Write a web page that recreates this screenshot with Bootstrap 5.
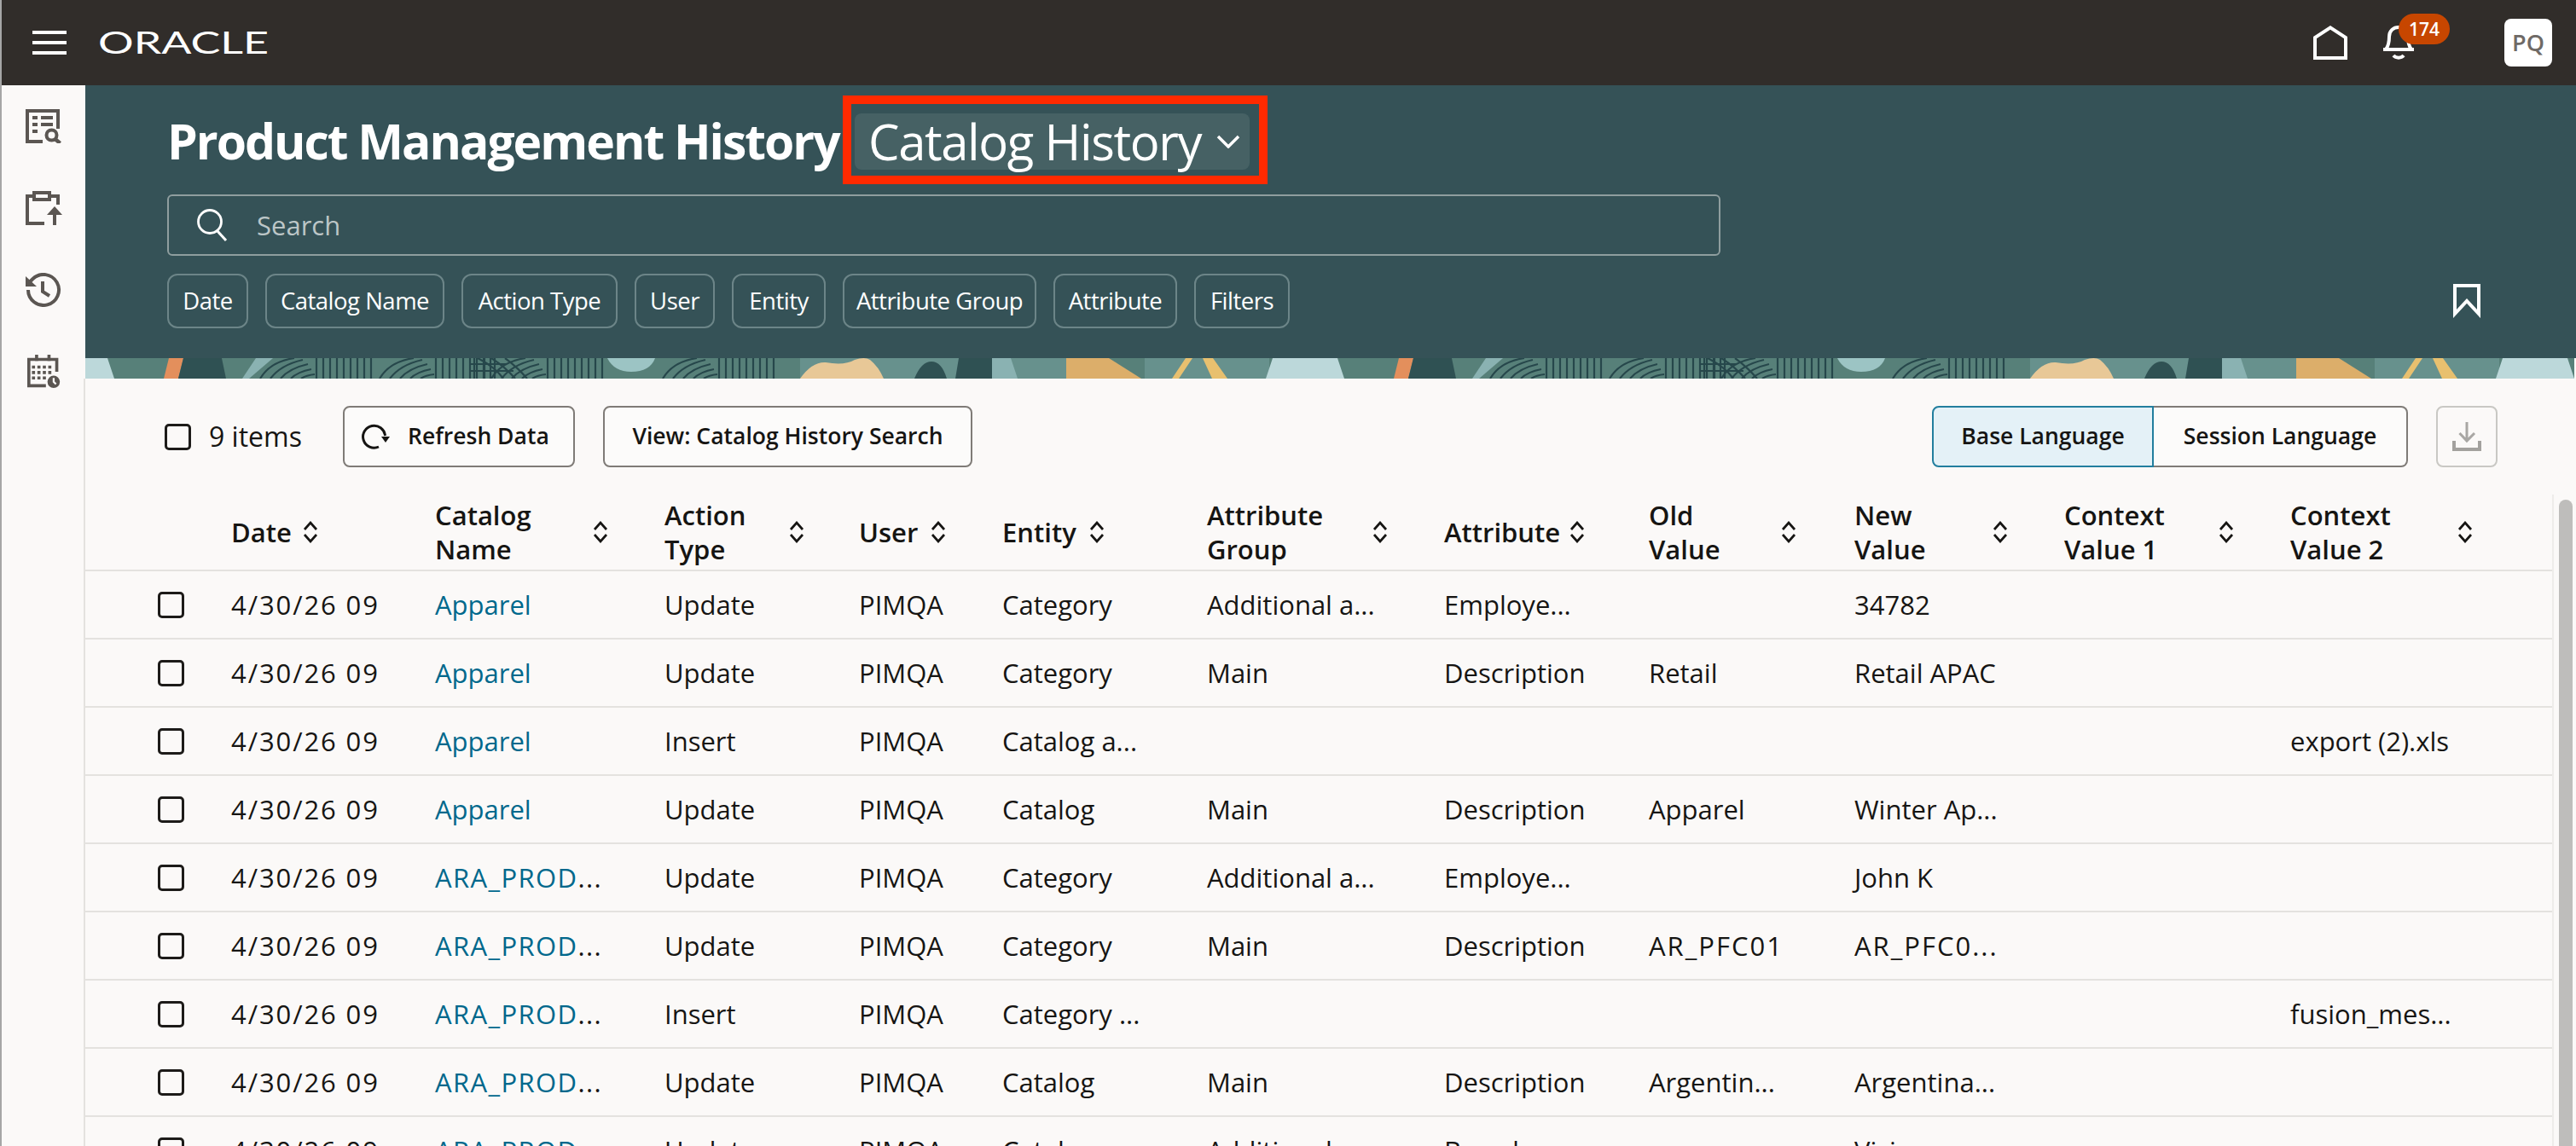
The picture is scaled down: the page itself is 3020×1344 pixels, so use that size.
<!DOCTYPE html>
<html lang="en">
<head>
<meta charset="utf-8">
<title>Product Management History</title>
<link href="https://cdn.jsdelivr.net/npm/bootstrap@5.3.0/dist/css/bootstrap.min.css" rel="stylesheet">
<style>
html,body{height:1344px;overflow:hidden}
body{background:#fbf9f8;color:#161513;font-family:"Open Sans","Liberation Sans",sans-serif;font-size:31px;border-left:2px solid #a6a6a6}
.topbar{height:100px;background:#312d2a;padding:0 28px 0 36px}
.burger{width:40px;height:28px;margin-right:37px}
.brand-word{width:200px;height:28px;overflow:visible}
.top-home{width:40px;height:40px;margin-right:42px}
.bell-wrap{width:36px;height:40px;margin-right:106px}
.bell-count{position:absolute;left:18px;top:-14px;width:60px;height:36px;border-radius:18px;background:#c74600;color:#fff;font-size:21px;font-weight:600;line-height:36px;text-align:center}
.avatar-box{width:56px;height:56px;background:#fff;border-radius:8px;color:#6f6a66;font-size:27px;font-weight:600}
.side-rail{width:96px;height:1244px;padding:28px 0 0 28px;gap:56px}
.rail-ico{width:44px;height:40px;display:block}
.main-pane{min-width:0}
.hero{height:320px;margin-left:2px;background:#355257;padding:12px 112px 0 96px;color:#fff}
.title-row{height:104px}
.page-title{font-size:57px;letter-spacing:-2px;font-weight:700;margin:2px 0 0;line-height:1;white-space:nowrap;width:792px;flex:none}
.red-box{width:498px;height:104px;border:10px solid #ff2a00;padding:11px 11px 11px 4px}
.switcher{height:66px;width:100%;background:#466164;border-radius:8px;padding-left:16px;font-size:58px;letter-spacing:-1.4px;line-height:1;gap:18px;white-space:nowrap}
.search-box{margin-top:12px;height:72px;width:1821px;border:2px solid #8f9e9f;border-radius:6px;padding-left:33px;gap:34px;font-size:31px;color:#bcc6c7}
.chip-row{margin-top:21px;gap:20px}
.fchip{height:64px;border:2px solid #6c8588;border-radius:12px;font-size:27.5px;letter-spacing:-.5px;color:#fff;display:flex;align-items:center;justify-content:center;white-space:nowrap;flex:none}
.fchip:nth-child(1){width:95px}.fchip:nth-child(2){width:210px}.fchip:nth-child(3){width:183px}.fchip:nth-child(4){width:94px}
.fchip:nth-child(5){width:110px}.fchip:nth-child(6){width:227px}.fchip:nth-child(7){width:145px}.fchip:nth-child(8){width:112px}
.pattern-band{height:24px;margin-left:2px;display:block;width:2918px}
.lower{border-left:2px solid #e4e2df;height:900px}
.tool-row{padding:32px 92px 0 93px;height:103px}
.tick{width:31px;height:31px;border:3px solid #1d1b19;border-radius:5px;flex:none;display:block}
.tool-count{width:209px;height:72px}
.count-label{margin-left:21px;font-weight:500;font-size:32px}
.act-btn{height:72px;border:2px solid #7f7b77;border-radius:8px;background:#fcfbfa;font-size:26.5px;font-weight:600;color:#161513;white-space:nowrap;padding:0;display:flex;align-items:center;justify-content:center}
.refresh-btn{width:272px;gap:20px;justify-content:flex-start;padding-left:20px}
.view-btn{width:433px;margin-left:33px}
.lang-group{width:558px;margin-left:auto}
.lang-a,.lang-b{height:72px;font-size:26.5px;font-weight:600;display:flex;align-items:center;justify-content:center}
.lang-a{width:260px;background:#e4f1f7;border:2px solid #227e9e;border-radius:8px 0 0 8px}
.lang-b{width:298px;background:#fcfbfa;border:2px solid #7f7b77;border-left:0;border-radius:0 8px 8px 0}
.export-btn{width:72px;height:72px;margin-left:33px;border:2px solid #c9c8c4;border-radius:8px}
.grid-wrap{height:797px;margin-top:33px;overflow:hidden}
.hist-grid{width:2892px;table-layout:fixed;margin:0;--bs-table-bg:transparent;--bs-table-color:#161513;--bs-table-border-color:#e4e2df;flex:none}
.hist-grid th,.hist-grid td{padding:0 0 0 16px;vertical-align:middle;border-bottom-width:2px;white-space:nowrap}
.hist-grid th{height:89px;font-weight:600;line-height:40px;font-size:31px}
.hist-grid td{height:80px;font-weight:400;font-size:31px}
.hist-grid .pick{padding-left:85px}
.datecell{letter-spacing:1.9px}
.caps-run{letter-spacing:1.4px}
.code-run{letter-spacing:2px}
.hist-grid a{color:#00688c;text-decoration:none}
.head-in{display:flex;align-items:center}
.head-in span{display:block;flex:none;white-space:normal}
th:nth-child(2) span{width:84px}th:nth-child(3) span{width:185px}th:nth-child(4) span{width:146px}
th:nth-child(5) span{width:84px}th:nth-child(6) span{width:102px}th:nth-child(7) span{width:194px}
th:nth-child(8) span{width:147px}th:nth-child(9) span{width:155px}th:nth-child(10) span{width:162px}
th:nth-child(11) span{width:181px}th:nth-child(12) span{width:196px}
.sorter{width:18px;height:26px;flex:none}
.scroll-side{width:26px;flex:none;border-left:2px solid #eeecea;padding:6px 2px 0 6px}
.scroll-thumb{width:16px;height:800px;background:#bebdbb;border-radius:8px}
</style>
</head>
<body>
<header class="topbar d-flex align-items-center">
  <svg class="burger" viewBox="0 0 40 28" aria-hidden="true"><path fill="#fff" d="M0 0h40v4H0zM0 12h40v4H0zM0 24h40v4H0z"/></svg>
  <svg class="brand-word" viewBox="0 0 200 28" aria-label="Oracle"><text x="0" y="27" font-family="Lato, sans-serif" font-size="37" fill="#fff" textLength="200" lengthAdjust="spacingAndGlyphs">ORACLE</text></svg>
  <div class="ms-auto d-flex align-items-center">
    <svg class="top-home" viewBox="0 0 40 40" aria-label="Home"><path fill="none" stroke="#fff" stroke-width="4" d="M2 38V14.2L20 2.4l18 11.8V38z"/></svg>
    <div class="bell-wrap position-relative">
      <svg width="36" height="40" viewBox="0 0 36 40" class="d-block" aria-label="Notifications"><path fill="none" stroke="#fff" stroke-width="4" d="M3 28C7 23 7 18 7 13 7 6 12 2 18 2s11 4 11 11c0 5 0 10 4 15"/><path fill="#fff" d="M0 26h36v4H0z"/><path fill="none" stroke="#fff" stroke-width="4" d="M12 35c3 3.500 9 3.500 12 0"/></svg>
      <span class="bell-count">174</span>
    </div>
    <div class="avatar-box d-flex align-items-center justify-content-center">PQ</div>
  </div>
</header>
<div class="d-flex">
  <nav class="side-rail d-flex flex-column flex-shrink-0">
    <svg class="rail-ico" viewBox="0 0 44 40" aria-label="Search history"><g fill="none" stroke="#5b5652" stroke-width="4"><path d="M20 38H2V2h36v21"/><circle cx="30.500" cy="30.500" r="6"/><path d="M34.500 35l6 5" stroke-width="4.500"/></g><path fill="#5b5652" d="M8 8h6v4H8zM18 8h14v4H18zM8 16h6v4H8zM18 16h14v4H18zM8 24h6v4H8z"/></svg>
    <svg class="rail-ico" viewBox="0 0 44 40" aria-label="Upload"><g fill="none" stroke="#5b5652" stroke-width="4"><path d="M22 38H2V6h36v10"/><path fill="#fbf9f8" d="M10 2h18v8H10z"/><path d="M34 40V24"/></g><path fill="#5b5652" d="M34 18l9 10h-18z"/></svg>
    <svg class="rail-ico" viewBox="0 0 44 40" aria-label="History"><g fill="none" stroke="#5b5652" stroke-width="4"><path d="M3 20a18 18 0 1 0 5.500-13L3.500 12"/><path d="M20 10v12l8 5"/></g><path fill="#5b5652" d="M0 4v12h13z"/></svg>
    <svg class="rail-ico" viewBox="0 0 44 44" aria-label="Schedule"><g fill="none" stroke="#5b5652" stroke-width="4"><path d="M24 40H2V6h36v16"/></g><path fill="#5b5652" d="M10 0h4v8h-4zM26 0h4v8h-4zM6 14h4v4H6zM13 14h4v4h-4zM20 14h4v4h-4zM27 14h4v4h-4zM6 21h4v4H6zM13 21h4v4h-4zM20 21h4v4h-4zM27 21h4v4h-4zM6 28h4v4H6zM13 28h4v4h-4zM20 28h4v4h-4z"/><circle cx="34" cy="35" r="8" fill="#5b5652"/><path d="M34 30v5l3 3" fill="none" stroke="#fbf9f8" stroke-width="2.500"/></svg>
  </nav>
  <main class="main-pane flex-grow-1">
    <section class="hero d-flex flex-column">
      <div class="title-row d-flex align-items-center">
        <h1 class="page-title">Product Management History</h1>
        <div class="red-box flex-shrink-0">
          <div class="switcher d-flex align-items-center"><span>Catalog History</span><svg width="28" height="16" viewBox="0 0 28 16" aria-hidden="true"><path fill="none" stroke="#fff" stroke-width="3.500" d="M2 2l12 12L26 2"/></svg></div>
        </div>
      </div>
      <div class="search-box d-flex align-items-center">
        <svg width="36" height="38" viewBox="0 0 36 38" aria-hidden="true"><circle cx="15" cy="15" r="13.500" fill="none" stroke="#fff" stroke-width="2.800"/><path d="M24 26l10 11" stroke="#fff" stroke-width="3"/></svg>
        <span>Search</span>
      </div>
      <div class="chip-row d-flex align-items-center">
        <span class="fchip">Date</span><span class="fchip">Catalog Name</span><span class="fchip">Action Type</span><span class="fchip">User</span><span class="fchip">Entity</span><span class="fchip">Attribute Group</span><span class="fchip">Attribute</span><span class="fchip">Filters</span>
        <svg class="ms-auto" width="32" height="40" viewBox="0 0 32 40" aria-label="Saved searches"><path fill="none" stroke="#fff" stroke-width="4" d="M2 2h28v33L16 20 2 35z"/></svg>
      </div>
    </section>
    <svg class="pattern-band" viewBox="0 0 2918 24" preserveAspectRatio="none" aria-hidden="true">
      <defs>
        <g id="prints" fill="none" stroke="#26474b" stroke-width="2.200">
          <path d="M0 24Q12 4 40 0M12 24Q24 8 50 2M24 24Q34 12 56 7M36 24Q44 16 60 13M48 24Q54 20 64 19"/>
          <path d="M66 0v24M74 0v24M82 0v24M90 0v24M98 0v24M106 0v24M114 0v24M122 0v24M130 0v24"/>
        </g>
        <g id="nets" fill="none" stroke="#26474b" stroke-width="2.200">
          <path d="M0 24Q-10 10-30 0M14 24Q2 10-14 0M28 24Q16 10 2 0"/>
          <path d="M-34 0v24M-22 0v24M-10 0v24M-40 7h44M-40 15h52"/>
        </g>
        <pattern id="tile" width="1442" height="24" patternUnits="userSpaceOnUse">
          <rect width="1442" height="24" fill="#578079"/>
          <path fill="#67918d" d="M838 0h360v24H838zM1242 0h146v24h-146z"/>
          <path fill="#bcd8da" d="M0 0h26l8 24H0zM1392 0h50v24h-58z"/>
          <path fill="#e38f5c" d="M98 0h17l-6 24H92z"/>
          <path fill="#2f5153" d="M115 0h45l5 24h-56z"/>
          <path fill="#8ab2b2" d="M200 0h20l-28 24h-8z"/>
          <use href="#prints" x="205"/>
          <use href="#prints" x="345"/>
          <use href="#nets" x="490"/>
          <use href="#prints" x="476"/>
          <path fill="#9cc4c4" d="M612 0h56q-6 16-28 16-20 0-28-16z"/>
          <use href="#prints" x="677"/>
          <path fill="#e8c897" d="M838 24q14-20 30-19 22 4 34-3 12-4 18 0 10 8 16 22z"/>
          <path fill="#2f5153" d="M972 24q8-20 20-20 12 0 18 20zM1024 0h39l5 24h-48z"/>
          <path fill="#8ab2b2" d="M1063 0h22l8 24h-30z"/>
          <path fill="#dcae6a" d="M1150 0h50l38 24h-88z"/>
          <path fill="#e8c06f" d="M1290 0h8l-16 24h-8zM1310 0h12l17 24h-18z"/>
        </pattern>
      </defs>
      <rect width="2918" height="24" fill="url(#tile)"/>
    </svg>
    <section class="lower">
      <div class="tool-row d-flex align-items-start">
        <div class="d-flex align-items-center tool-count">
          <span class="tick"></span><span class="count-label">9 items</span>
        </div>
        <button type="button" class="act-btn refresh-btn"><svg width="34" height="30" viewBox="0 0 34 30" aria-hidden="true"><path fill="none" stroke="#161513" stroke-width="3" d="M20 27A13 13 0 1 1 27.500 14"/><path fill="#161513" d="M23 15h10l-5 7z"/></svg><span>Refresh Data</span></button>
        <button type="button" class="act-btn view-btn">View: Catalog History Search</button>
        <div class="lang-group d-flex">
          <div class="lang-a">Base Language</div><div class="lang-b">Session Language</div>
        </div>
        <div class="export-btn d-flex align-items-center justify-content-center">
          <svg width="34" height="34" viewBox="0 0 34 34" aria-label="Export"><path fill="none" stroke="#a9a7a4" stroke-width="3" d="M17 0v22M8.500 13l8.500 9 9-9"/><path fill="none" stroke="#a3a19e" stroke-width="4" d="M2 22v10h30V22"/></svg>
        </div>
      </div>
      <div class="grid-wrap d-flex">
        <table class="table hist-grid">
          <colgroup><col width="155"><col width="239"><col width="269"><col width="228"><col width="168"><col width="240"><col width="278"><col width="240"><col width="241"><col width="246"><col width="265"><col width="323"></colgroup>
          <thead>
            <tr>
              <th></th>
              <th><div class="head-in"><span>Date</span><svg class="sorter" viewBox="0 0 18 26"><use href="#srt"/></svg></div></th>
              <th><div class="head-in"><span>Catalog Name</span><svg class="sorter" viewBox="0 0 18 26"><use href="#srt"/></svg></div></th>
              <th><div class="head-in"><span>Action Type</span><svg class="sorter" viewBox="0 0 18 26"><use href="#srt"/></svg></div></th>
              <th><div class="head-in"><span>User</span><svg class="sorter" viewBox="0 0 18 26"><use href="#srt"/></svg></div></th>
              <th><div class="head-in"><span>Entity</span><svg class="sorter" viewBox="0 0 18 26"><use href="#srt"/></svg></div></th>
              <th><div class="head-in"><span>Attribute Group</span><svg class="sorter" viewBox="0 0 18 26"><use href="#srt"/></svg></div></th>
              <th><div class="head-in"><span>Attribute</span><svg class="sorter" viewBox="0 0 18 26"><use href="#srt"/></svg></div></th>
              <th><div class="head-in"><span>Old<br>Value</span><svg class="sorter" viewBox="0 0 18 26"><use href="#srt"/></svg></div></th>
              <th><div class="head-in"><span>New<br>Value</span><svg class="sorter" viewBox="0 0 18 26"><use href="#srt"/></svg></div></th>
              <th><div class="head-in"><span>Context Value 1</span><svg class="sorter" viewBox="0 0 18 26"><use href="#srt"/></svg></div></th>
              <th><div class="head-in"><span>Context Value 2</span><svg class="sorter" viewBox="0 0 18 26"><use href="#srt"/></svg></div></th>
            </tr>
          </thead>
          <tbody>
            <tr><td class="pick"><span class="tick"></span></td><td class="datecell">4/30/26 09</td><td><a href="#">Apparel</a></td><td>Update</td><td>PIMQA</td><td>Category</td><td>Additional a...</td><td>Employe...</td><td></td><td>34782</td><td></td><td></td></tr>
            <tr><td class="pick"><span class="tick"></span></td><td class="datecell">4/30/26 09</td><td><a href="#">Apparel</a></td><td>Update</td><td>PIMQA</td><td>Category</td><td>Main</td><td>Description</td><td>Retail</td><td>Retail APAC</td><td></td><td></td></tr>
            <tr><td class="pick"><span class="tick"></span></td><td class="datecell">4/30/26 09</td><td><a href="#">Apparel</a></td><td>Insert</td><td>PIMQA</td><td>Catalog a...</td><td></td><td></td><td></td><td></td><td></td><td>export (2).xls</td></tr>
            <tr><td class="pick"><span class="tick"></span></td><td class="datecell">4/30/26 09</td><td><a href="#">Apparel</a></td><td>Update</td><td>PIMQA</td><td>Catalog</td><td>Main</td><td>Description</td><td>Apparel</td><td>Winter Ap...</td><td></td><td></td></tr>
            <tr><td class="pick"><span class="tick"></span></td><td class="datecell">4/30/26 09</td><td class="caps-run"><a href="#">ARA_PROD</a>...</td><td>Update</td><td>PIMQA</td><td>Category</td><td>Additional a...</td><td>Employe...</td><td></td><td>John K</td><td></td><td></td></tr>
            <tr><td class="pick"><span class="tick"></span></td><td class="datecell">4/30/26 09</td><td class="caps-run"><a href="#">ARA_PROD</a>...</td><td>Update</td><td>PIMQA</td><td>Category</td><td>Main</td><td>Description</td><td class="code-run">AR_PFC01</td><td class="code-run">AR_PFC0...</td><td></td><td></td></tr>
            <tr><td class="pick"><span class="tick"></span></td><td class="datecell">4/30/26 09</td><td class="caps-run"><a href="#">ARA_PROD</a>...</td><td>Insert</td><td>PIMQA</td><td>Category ...</td><td></td><td></td><td></td><td></td><td></td><td>fusion_mes...</td></tr>
            <tr><td class="pick"><span class="tick"></span></td><td class="datecell">4/30/26 09</td><td class="caps-run"><a href="#">ARA_PROD</a>...</td><td>Update</td><td>PIMQA</td><td>Catalog</td><td>Main</td><td>Description</td><td>Argentin...</td><td>Argentina...</td><td></td><td></td></tr>
            <tr><td class="pick"><span class="tick"></span></td><td class="datecell">4/30/26 09</td><td class="caps-run"><a href="#">ARA_PROD</a>...</td><td>Update</td><td>PIMQA</td><td>Catalog</td><td>Additional a...</td><td>Brand</td><td></td><td>Vision</td><td></td><td></td></tr>
          </tbody>
        </table>
        <div class="scroll-side"><div class="scroll-thumb"></div></div>
      </div>
    </section>
  </main>
</div>
<svg width="0" height="0" class="position-absolute" aria-hidden="true"><symbol id="srt" viewBox="0 0 18 26"><path fill="none" stroke="#161513" stroke-width="2.700" d="M2 10l7-8 7 8M2 16l7 8 7-8"/></symbol></svg>
<script src="https://cdn.jsdelivr.net/npm/bootstrap@5.3.0/dist/js/bootstrap.bundle.min.js"></script>
</body>
</html>
